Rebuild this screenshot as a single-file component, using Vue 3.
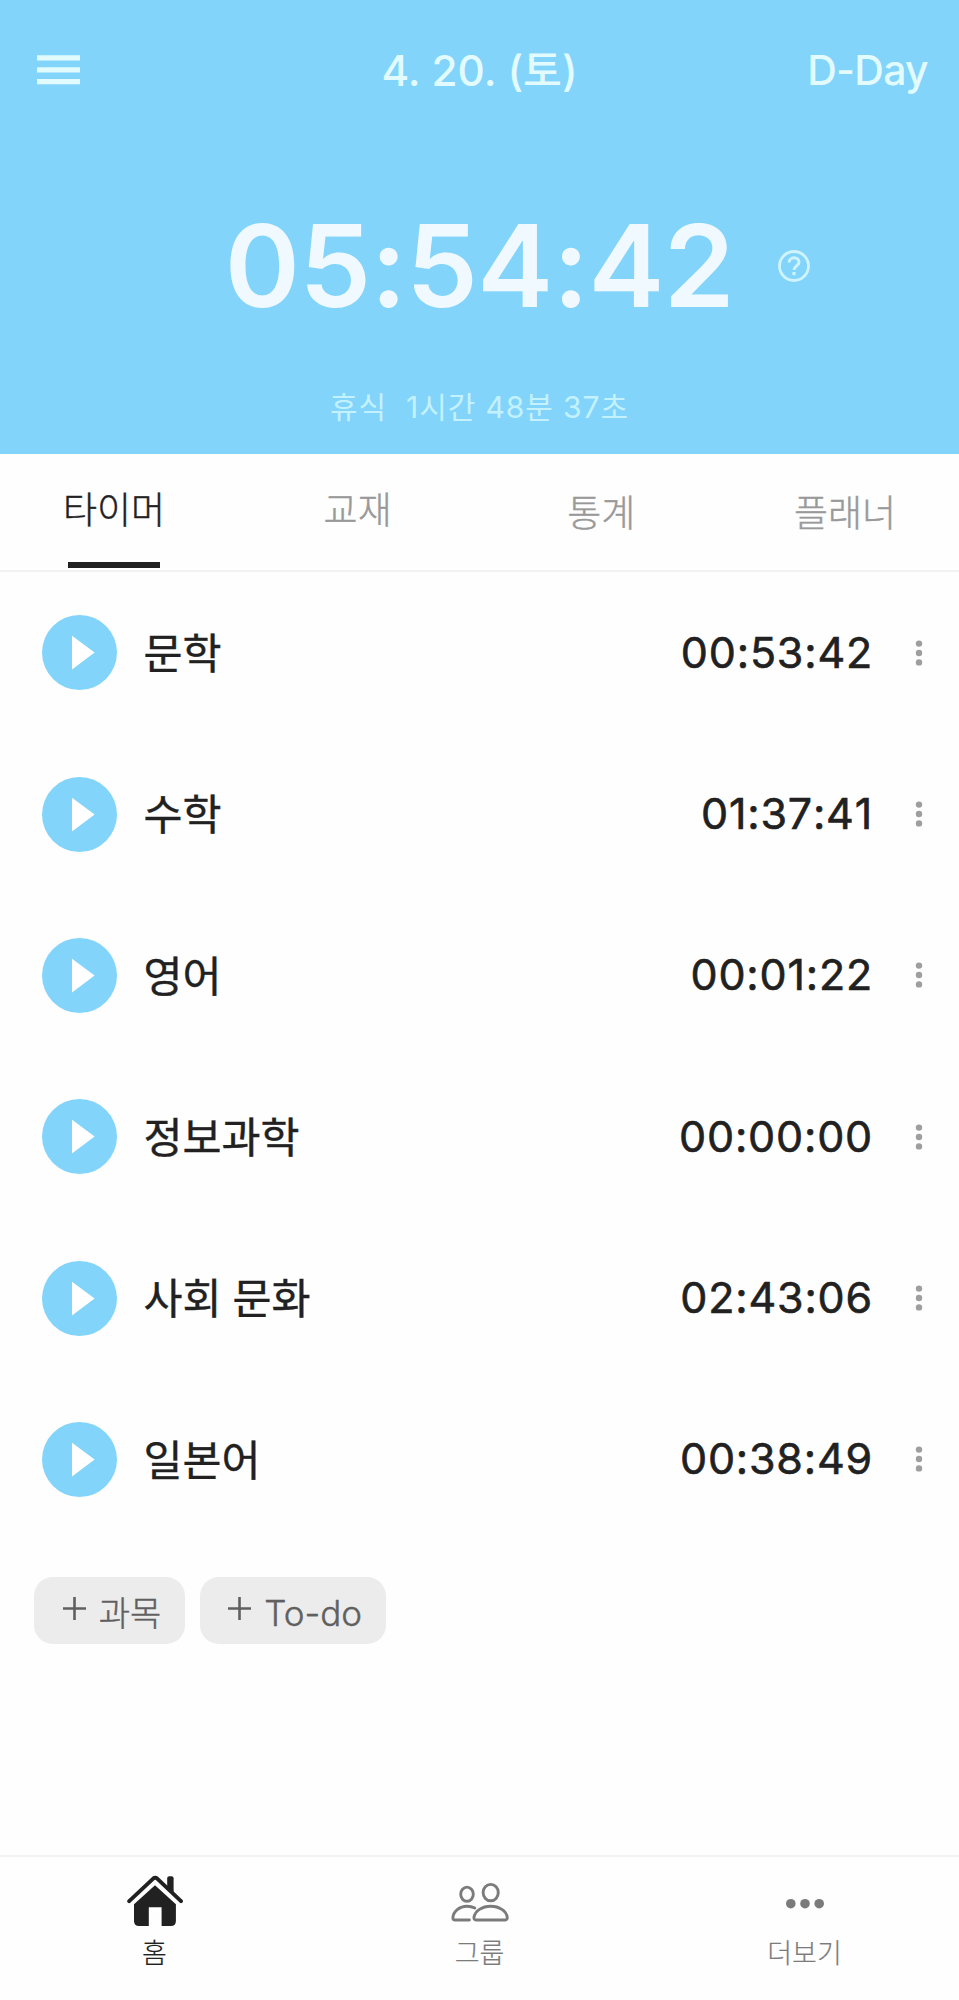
<script setup>
const tabs = [
  { label: '타이머', active: true },
  { label: '교재' },
  { label: '통계', low: true },
  { label: '플래너', low: true },
]

const subjects = [
  { name: '문학', time: '00:53:42' },
  { name: '수학', time: '01:37:41' },
  { name: '영어', time: '00:01:22' },
  { name: '정보과학', time: '00:00:00' },
  { name: '사회 문화', time: '02:43:06' },
  { name: '일본어', time: '00:38:49' },
]
</script>

<template>
  <div class="screen">
    <header class="hero">
      <div class="topbar">
        <svg class="menu" width="43" height="30" viewBox="0 0 43 30">
          <path d="M0 2.8H43M0 14.8H43M0 26.6H43" stroke="#e2fbff" stroke-width="5.2" />
        </svg>
        <h1 class="date">4. 20. (토)</h1>
        <span class="dday">D-Day</span>
      </div>
      <div class="total">
        <div class="clock">05:54:42</div>
        <svg class="help" width="32" height="32" viewBox="0 0 32 32" fill="none">
          <circle cx="16" cy="16" r="14.5" stroke="#cff4ff" stroke-width="2.8" />
          <path d="M11.1 12.6C11.1 9.6 13.2 7.7 16 7.7C18.9 7.7 21 9.6 21 12.2C21 15.6 16 15.8 16 20.1" stroke="#cff4ff" stroke-width="3" />
          <rect x="14.4" y="22" width="3.2" height="3.2" fill="#cff4ff" />
        </svg>
      </div>
      <div class="rest"><span>휴식</span><span>1시간 48분 37초</span></div>
    </header>

    <nav class="tabs">
      <div v-for="t in tabs" :key="t.label" class="tab" :class="{ active: t.active, low: t.low }">
        <span>{{ t.label }}</span>
      </div>
    </nav>

    <main class="list">
      <div v-for="s in subjects" :key="s.name" class="row">
        <svg class="play" width="75" height="75" viewBox="0 0 75 75">
          <circle cx="37.5" cy="37.5" r="37.5" fill="#82d4fb" />
          <path d="M30 20.8L52.6 37.5L30 54.4Z" fill="#fff" />
        </svg>
        <span class="name">{{ s.name }}</span>
        <span class="time">{{ s.time }}</span>
        <svg class="kebab" width="8" height="28" viewBox="0 0 8 28" fill="#9e9e9e">
          <circle cx="4" cy="4.6" r="3.2" />
          <circle cx="4" cy="14" r="3.2" />
          <circle cx="4" cy="23.4" r="3.2" />
        </svg>
      </div>
      <div class="chips">
        <button class="chip">
          <svg width="23" height="23" viewBox="0 0 23 23"><path d="M0 11.5H23M11.5 0V23" stroke="#606060" stroke-width="2.6" /></svg>
          <span>과목</span>
        </button>
        <button class="chip todo">
          <svg width="23" height="23" viewBox="0 0 23 23"><path d="M0 11.5H23M11.5 0V23" stroke="#606060" stroke-width="2.6" /></svg>
          <span>To-do</span>
        </button>
      </div>
    </main>

    <footer class="bottom">
      <div class="item active">
        <svg width="56" height="52" viewBox="0 0 56 52">
          <path d="M40.2 3.2Q40.2 1.2 42.2 1.2H44.6Q46.6 1.2 46.6 3.2V20L40.2 14Z" fill="#212121" />
          <path d="M2.2 26.2L26.2 3.6Q28.2 1.9 30.2 3.6L54 26.2" fill="none" stroke="#212121" stroke-width="3.9" stroke-linecap="round" stroke-linejoin="round" />
          <path d="M28 10.2L48.9 29.2V46Q48.9 51 43.9 51H34.6V32.2H21.8V51H12Q7 51 7 46V29.2Z" fill="#212121" />
        </svg>
        <span>홈</span>
      </div>
      <div class="item">
        <svg width="58" height="52" viewBox="0 0 58 52" fill="none" stroke="#7b7b7b" stroke-width="2.9" stroke-linecap="round" stroke-linejoin="round">
          <ellipse cx="16" cy="19.2" rx="6.3" ry="7.1" />
          <ellipse cx="39.7" cy="17.6" rx="7.6" ry="8.2" />
          <path d="M23.8 33C21.6 31.8 18.9 31.2 16 31.2C8.5 31.2 2.3 36.5 1.9 42.6Q1.9 45 3.6 45H18.4" />
          <path d="M25 45C23.2 45 22.8 43.6 23 42.2C24 36 31 31.2 39.7 31.2C48.4 31.2 55.4 36 56.2 42.2C56.4 43.6 56 45 54.2 45Z" />
        </svg>
        <span>그룹</span>
      </div>
      <div class="item">
        <svg width="40" height="52" viewBox="0 0 40 52" fill="#7b7b7b">
          <circle cx="5.8" cy="28.7" r="4.8" />
          <circle cx="20" cy="28.7" r="4.8" />
          <circle cx="34.2" cy="28.7" r="4.8" />
        </svg>
        <span>더보기</span>
      </div>
    </footer>
  </div>
</template>

<style>
body {
  margin: 0;
  background: #fefefe;
}
</style>

<style scoped>
.screen {
  display: flex;
  flex-direction: column;
  width: 959px;
  height: 2000px;
  overflow: hidden;
  background: #fefefe;
  color: #212121;
  font-family: "Noto Sans CJK KR", sans-serif;
}
.hero {
  height: 454px;
  flex: none;
  background: #82d4fb;
}
.topbar {
  display: grid;
  grid-template-columns: 1fr auto 1fr;
  align-items: center;
  height: 140px;
  padding: 0 31px 0 37px;
  color: #e2fbff;
}
.date {
  margin: 2px 0 0 -6px;
  font: 500 42.3px/60px Inter, "Noto Sans CJK KR", sans-serif;
}
.dday {
  justify-self: end;
  font: 500 41px/60px Inter, sans-serif;
  letter-spacing: -0.7px;
}
.total {
  display: grid;
  grid-template-columns: 1fr auto 1fr;
  align-items: center;
  height: 252px;
}
.clock {
  grid-column: 2;
  font: 600 114px/140px Inter, sans-serif;
  letter-spacing: -0.6px;
  color: #eff9ff;
}
.help {
  margin-left: 44px;
}
.rest {
  display: flex;
  justify-content: center;
  gap: 19px;
  margin-top: -5px;
  font: 400 30px/40px Inter, "Noto Sans CJK KR", sans-serif;
  letter-spacing: 0.9px;
  color: #c3f2fe;
}
.tabs {
  display: flex;
  justify-content: space-between;
  flex: none;
  box-sizing: border-box;
  height: 118px;
  padding: 0 68px;
  border-bottom: 2px solid #f2f2f2;
}
.tab {
  display: flex;
  justify-content: center;
  box-sizing: border-box;
  width: 92px;
  height: 114px;
  padding-top: 28.5px;
  font-size: 37px;
  font-weight: 300;
  line-height: 50px;
  white-space: nowrap;
  color: #999;
  -webkit-text-stroke: 0.4px currentColor;
}
.tab.low {
  padding-top: 31.5px;
}
.tab.active {
  color: #212121;
  border-bottom: 6px solid #212121;
}
.list {
  flex: 1;
  padding-top: 0.2px;
}
.row {
  display: flex;
  align-items: center;
  height: 161.3px;
  padding: 0 36px 0 42px;
}
.name {
  margin: -3.4px 0 0 26.4px;
  font-size: 42.4px;
  font-weight: 400;
  line-height: 60px;
  word-spacing: 1.5px;
  -webkit-text-stroke: 0.4px currentColor;
}
.time {
  margin: -2px 0 0 auto;
  font: 400 43px/60px Inter, sans-serif;
  font-kerning: none;
  letter-spacing: 0.8px;
  -webkit-text-stroke: 0.6px currentColor;
}
.kebab {
  margin-left: 42px;
}
.chips {
  display: flex;
  gap: 15px;
  padding: 37.3px 0 0 34.2px;
}
.chip {
  display: flex;
  align-items: center;
  box-sizing: border-box;
  width: 150.5px;
  height: 66.5px;
  padding: 0 0 0 28.5px;
  border: 0;
  border-radius: 19px;
  background: #ececec;
  font: 300 34px/50px "Noto Sans CJK KR", sans-serif;
  color: #606060;
  -webkit-text-stroke: 0.4px currentColor;
}
.chip svg {
  flex: none;
  margin-bottom: 4px;
}
.chip span {
  margin: 3px 0 0 13px;
}
.chip.todo {
  width: 186px;
  font: 300 35px/50px Inter, sans-serif;
}
.chip.todo span {
  margin-top: 4px;
}
.bottom {
  display: flex;
  justify-content: space-between;
  flex: none;
  box-sizing: border-box;
  height: 145px;
  padding: 18px 54.5px 0;
  border-top: 2px solid #f3f3f3;
}
.item {
  display: flex;
  flex-direction: column;
  align-items: center;
  width: 200px;
  font-size: 27px;
  font-weight: 300;
  line-height: 40px;
  color: #7b7b7b;
}
.item span {
  margin-top: 5px;
  -webkit-text-stroke: 0.2px currentColor;
}
.item.active {
  color: #212121;
}
</style>
